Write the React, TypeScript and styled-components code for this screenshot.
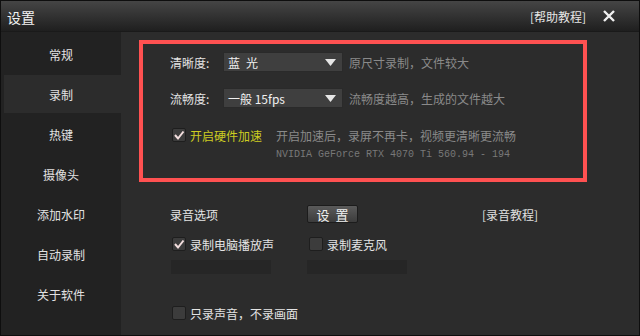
import React from "react";
import styled, { createGlobalStyle } from "styled-components";

const Global = createGlobalStyle`
  html, body { margin: 0; padding: 0; background: #2c2c2c; }
  body { font-family: "Noto Sans CJK SC", "Noto Sans", sans-serif; }
  * { box-sizing: border-box; }
`;

const Win = styled.div`
  width: 640px;
  height: 336px;
  border: 1px solid #0e0e0e;
  display: flex;
  flex-direction: column;
  background: #2c2c2c;
  overflow: hidden;
`;

const TitleBar = styled.div`
  height: 31px;
  flex: none;
  display: flex;
  align-items: center;
  padding: 0 0 0 6px;
  background: linear-gradient(#454545, #1f1f1f);
  border-bottom: 1px solid #1a1a1a;
  color: #f2f2f2;
`;

const Title = styled.div`
  font-size: 14px;
  flex: 1;
  padding-top: 1px;
`;

const HelpLink = styled.div`
  font-size: 12px;
  color: #e6e6e6;
  margin-right: 17px;
`;

const CloseBtn = styled.div`
  width: 12px;
  height: 12px;
  margin-right: 24px;
  display: flex;
`;

const Body = styled.div`
  flex: 1;
  display: flex;
  min-height: 0;
`;

const Sidebar = styled.div`
  width: 120px;
  flex: none;
  background: #222222;
  display: flex;
  flex-direction: column;
  gap: 2px;
  padding-top: 3px;
`;

const NavItem = styled.div<{ $active?: boolean }>`
  height: 38px;
  margin-left: 3px;
  display: flex;
  align-items: center;
  justify-content: center;
  padding-right: 3px;
  font-size: 12px;
  color: #e2e2e2;
  background: ${(p) => (p.$active ? "#2c2c2c" : "transparent")};
`;

const Main = styled.div`
  flex: 1;
  background: #2c2c2c;
  padding: 8px 0 0 18px;
  display: flex;
  flex-direction: column;
`;

const RedBox = styled.div`
  width: 448px;
  height: 142px;
  border: 4px solid #ff5151;
  padding: 8px 0 0 27px;
  display: flex;
  flex-direction: column;
`;

const Row = styled.div<{ $mt?: number }>`
  height: 20px;
  display: flex;
  align-items: center;
  margin-top: ${(p) => p.$mt ?? 0}px;
`;

const Label = styled.div`
  width: 53px;
  font-size: 12px;
  color: #e4e4e4;
  white-space: nowrap;
`;

const Select = styled.div`
  width: 120px;
  height: 20px;
  background: #3f3f3f;
  border: 1px solid #2a2a2a;
  display: flex;
  align-items: center;
  padding: 0 6px 0 4px;
  font-size: 12px;
  color: #f0f0f0;
`;

const SelectText = styled.div`
  flex: 1;
  white-space: pre;
`;

const Hint = styled.div<{ $ml?: number }>`
  margin-left: ${(p) => p.$ml ?? 6}px;
  font-size: 12px;
  color: #8a8a8a;
  white-space: nowrap;
`;

const Check = styled.div`
  width: 14px;
  height: 14px;
  margin-left: 2px;
  border-radius: 2px;
  background: #3c3c3c;
  border: 1px solid #1e1e1e;
  display: flex;
  align-items: center;
  justify-content: center;
  flex: none;
`;

const CheckLabel = styled.div<{ $yellow?: boolean; $w?: number }>`
  margin-left: 4px;
  font-size: 12px;
  color: ${(p) => (p.$yellow ? "#cccc22" : "#e4e4e4")};
  white-space: nowrap;
  width: ${(p) => (p.$w ? `${p.$w}px` : "auto")};
`;

const GpuLine = styled.div`
  margin-top: 3px;
  padding-left: 106px;
  height: 14px;
  line-height: 14px;
  font-family: "Liberation Mono", "DejaVu Sans Mono", monospace;
  font-size: 10px;
  color: #787878;
  white-space: nowrap;
`;

const Section = styled.div`
  padding-left: 31px;
  display: flex;
  flex-direction: column;
`;

const Col = styled.div<{ $w: number }>`
  width: ${(p) => p.$w}px;
  flex: none;
  display: flex;
  align-items: center;
`;

const Button = styled.div`
  width: 51px;
  height: 18px;
  border: 1px solid #1c1c1c;
  border-radius: 2px;
  background: linear-gradient(#5a5a5a, #3c3c3c);
  color: #f0f0f0;
  font-size: 13px;
  display: flex;
  align-items: center;
  justify-content: center;
  letter-spacing: 6px;
  padding-left: 6px;
`;

const Link = styled.div`
  font-size: 12px;
  color: #e0e0e0;
`;

const Meter = styled.div`
  width: 100px;
  height: 14px;
  background: #262626;
  margin-left: 1px;
`;

const Tick = () => (
  <svg width="12" height="12" viewBox="0 0 12 12">
    <polyline points="2,6 5,9.5 10.5,2.5" fill="none" stroke="#f3dede" strokeWidth="2" />
  </svg>
);

const CheckBox = ({ checked }: { checked?: boolean }) => <Check>{checked && <Tick />}</Check>;

const Arrow = () => (
  <svg width="11" height="7" viewBox="0 0 11 7">
    <polygon points="0,0 11,0 5.5,7" fill="#e6e6e6" />
  </svg>
);

const navItems = ["常规", "录制", "热键", "摄像头", "添加水印", "自动录制", "关于软件"];

export default function App() {
  return (
    <>
      <Global />
      <Win>
        <TitleBar>
          <Title>设置</Title>
          <HelpLink>[帮助教程]</HelpLink>
          <CloseBtn>
            <svg width="12" height="12" viewBox="0 0 12 12">
              <path d="M1 1 L11 11 M11 1 L1 11" stroke="#f0f0f0" strokeWidth="2.4" />
            </svg>
          </CloseBtn>
        </TitleBar>
        <Body>
          <Sidebar>
            {navItems.map((n) => (
              <NavItem key={n} $active={n === "录制"}>
                {n}
              </NavItem>
            ))}
          </Sidebar>
          <Main>
            <RedBox>
              <Row>
                <Label>清晰度:</Label>
                <Select>
                  <SelectText>{"蓝\u2002光"}</SelectText>
                  <Arrow />
                </Select>
                <Hint>原尺寸录制，文件较大</Hint>
              </Row>
              <Row $mt={16}>
                <Label>流畅度:</Label>
                <Select>
                  <SelectText>一般 15fps</SelectText>
                  <Arrow />
                </Select>
                <Hint>流畅度越高，生成的文件越大</Hint>
              </Row>
              <Row $mt={17}>
                <CheckBox checked />
                <CheckLabel $yellow $w={86}>开启硬件加速</CheckLabel>
                <Hint $ml={0}>开启加速后，录屏不再卡，视频更清晰更流畅</Hint>
              </Row>
              <GpuLine>NVIDIA GeForce RTX 4070 Ti 560.94 - 194</GpuLine>
            </RedBox>
            <Section>
              <Row $mt={22}>
                <Col $w={137}>
                  <Label>录音选项</Label>
                </Col>
                <Col $w={175}>
                  <Button>设置</Button>
                </Col>
                <Link>[录音教程]</Link>
              </Row>
              <Row $mt={10}>
                <Col $w={137}>
                  <CheckBox checked />
                  <CheckLabel>录制电脑播放声</CheckLabel>
                </Col>
                <Col $w={137}>
                  <CheckBox />
                  <CheckLabel>录制麦克风</CheckLabel>
                </Col>
              </Row>
              <Row $mt={3}>
                <Col $w={136}>
                  <Meter />
                </Col>
                <Col $w={136}>
                  <Meter />
                </Col>
              </Row>
              <Row $mt={26}>
                <CheckBox />
                <CheckLabel>只录声音，不录画面</CheckLabel>
              </Row>
            </Section>
          </Main>
        </Body>
      </Win>
    </>
  );
}
